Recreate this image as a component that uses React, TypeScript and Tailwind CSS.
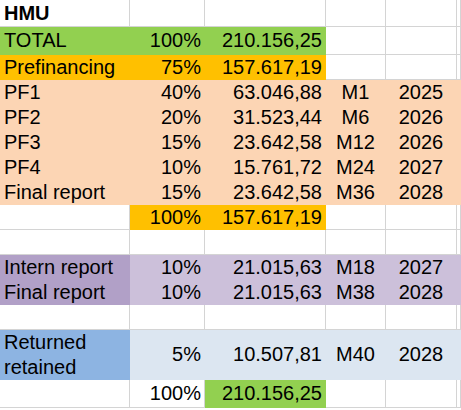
import React from 'react';

type Row = {
  h: string;
  cells: string[];
  fills: string[];
  bold?: boolean;
  wrap?: boolean;
};

const WHITE = 'bg-white border-[#d4d4d4]';
const GREEN = 'bg-[#92d050] border-[#92d050]';
const ORANGE = 'bg-[#ffc000] border-[#ffc000]';
const PEACH = 'bg-[#fcd5b4] border-[#fcd5b4]';
const PURPLE = 'bg-[#b1a0c7] border-[#b1a0c7]';
const LILAC = 'bg-[#ccc0da] border-[#ccc0da]';
const BLUE = 'bg-[#8db4e2] border-[#8db4e2]';
const ICE = 'bg-[#dce6f1] border-[#dce6f1]';

const peachRow = [PEACH, PEACH, PEACH, PEACH, PEACH, PEACH];
const whiteRow = [WHITE, WHITE, WHITE, WHITE, WHITE, WHITE];
const lilacRow = [PURPLE, LILAC, LILAC, LILAC, LILAC, LILAC];

const rows: Row[] = [
  { h: 'h-[27px]', cells: ['HMU', '', '', '', ''], fills: whiteRow, bold: true },
  { h: 'h-[28px]', cells: ['TOTAL', '100%', '210.156,25', '', ''], fills: [GREEN, GREEN, GREEN, WHITE, WHITE, WHITE] },
  { h: 'h-[25px]', cells: ['Prefinancing', '75%', '157.617,19', '', ''], fills: [ORANGE, ORANGE, ORANGE, WHITE, WHITE, WHITE] },
  { h: 'h-[25px]', cells: ['PF1', '40%', '63.046,88', 'M1', '2025'], fills: peachRow },
  { h: 'h-[25px]', cells: ['PF2', '20%', '31.523,44', 'M6', '2026'], fills: peachRow },
  { h: 'h-[25px]', cells: ['PF3', '15%', '23.642,58', 'M12', '2026'], fills: peachRow },
  { h: 'h-[25px]', cells: ['PF4', '10%', '15.761,72', 'M24', '2027'], fills: peachRow },
  { h: 'h-[25px]', cells: ['Final report', '15%', '23.642,58', 'M36', '2028'], fills: peachRow },
  { h: 'h-[25px]', cells: ['', '100%', '157.617,19', '', ''], fills: [WHITE, ORANGE, ORANGE, WHITE, WHITE, WHITE] },
  { h: 'h-[25px]', cells: ['', '', '', '', ''], fills: whiteRow },
  { h: 'h-[25px]', cells: ['Intern report', '10%', '21.015,63', 'M18', '2027'], fills: lilacRow },
  { h: 'h-[25px]', cells: ['Final report', '10%', '21.015,63', 'M38', '2028'], fills: lilacRow },
  { h: 'h-[25px]', cells: ['', '', '', '', ''], fills: whiteRow },
  { h: 'h-[50px]', cells: ['Returned retained', '5%', '10.507,81', 'M40', '2028'], fills: [BLUE, ICE, ICE, ICE, ICE, ICE], wrap: true },
  { h: 'h-[28px]', cells: ['', '100%', '210.156,25', '', ''], fills: [WHITE, WHITE, GREEN, WHITE, WHITE, WHITE] },
];

const colClass = [
  'w-[130px] pl-[4px] justify-start',
  'w-[75px] pr-[3px] justify-end',
  'w-[121px] pr-[3px] justify-end',
  'w-[60px] justify-center',
  'w-[71px] justify-center',
  'flex-1',
];

export default function App() {
  return (
    <div className="w-[461px] h-[410px] bg-white overflow-hidden font-['Liberation_Sans',Arial,sans-serif] text-[20px] text-black">
      {rows.map((row, r) => (
        <div key={r} className={`flex ${row.h}`}>
          {[...row.cells, ''].map((text, c) => (
            <div
              key={c}
              className={`flex items-center shrink-0 border-r border-b whitespace-nowrap ${colClass[c]} ${row.fills[c]} ${
                row.bold && c === 0 ? 'font-bold' : ''
              }`}
            >
              {row.wrap && c === 0 ? (
                <span className="whitespace-normal leading-[25px]">{text}</span>
              ) : (
                <span className="leading-[23px]">{text}</span>
              )}
            </div>
          ))}
        </div>
      ))}
    </div>
  );
}
